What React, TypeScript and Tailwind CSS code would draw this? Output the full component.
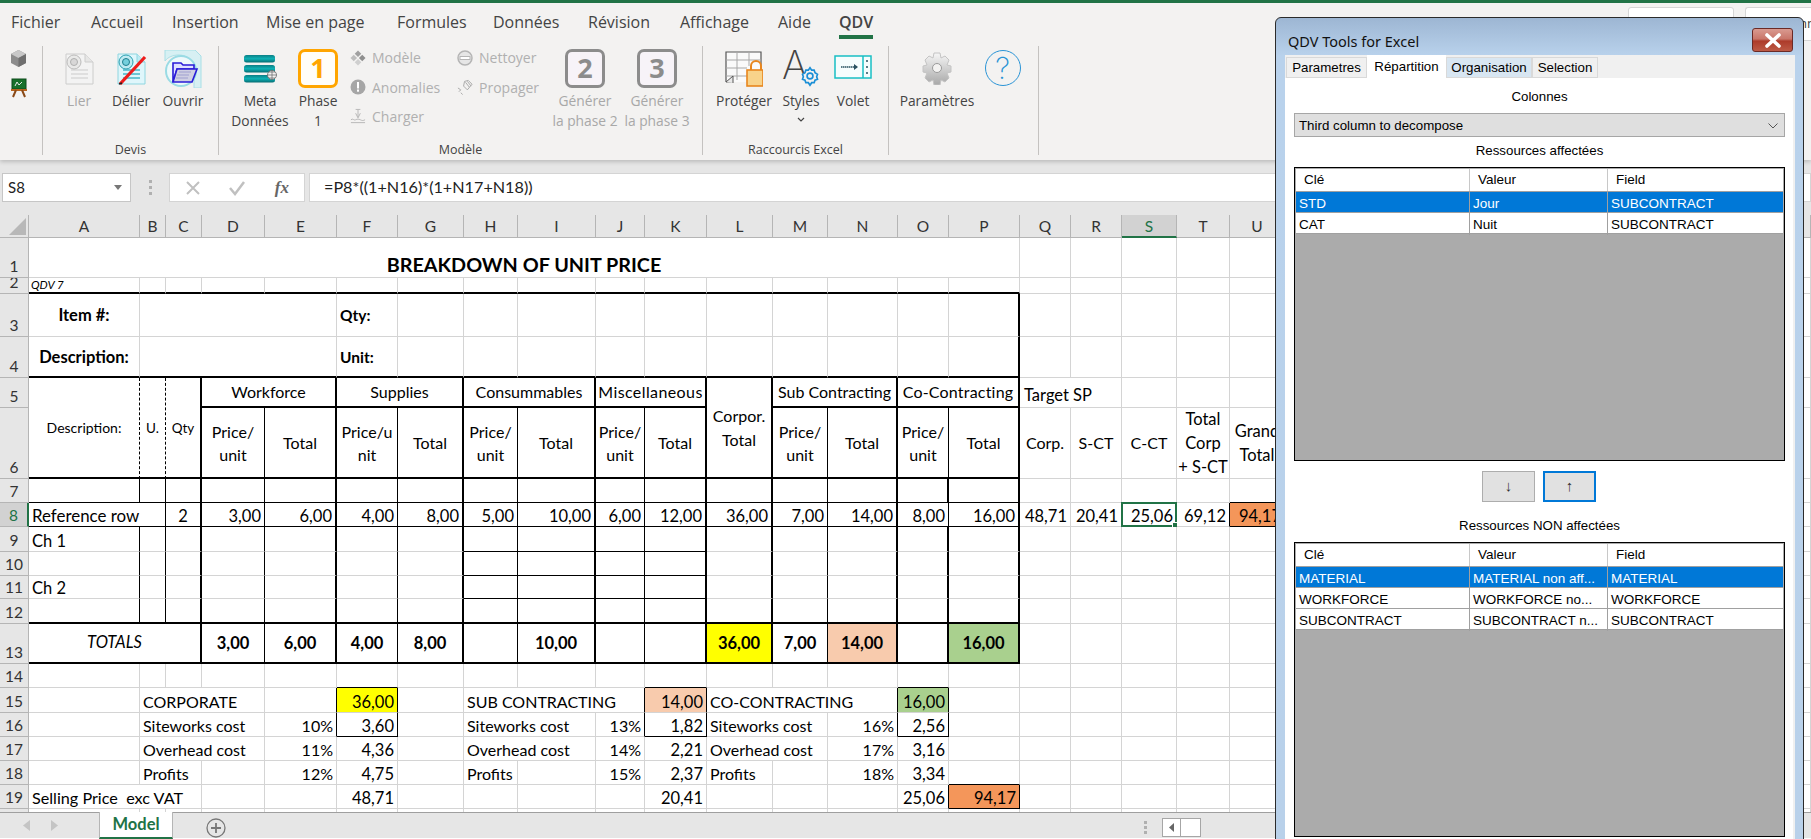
import React from "react";

const COLS = "ABCDEFGHIJKLMNOPQRSTUV".split("");
type Cell = { t?: string; c?: string };
const NUM = "justify-end items-end pr-[3px]";
const LEFT = "justify-start items-end pl-[3px]";
const LBL = LEFT + " text-[16px]";
const PCT = NUM + " text-[16px]";
const CTR = "justify-center items-center text-center whitespace-pre-line";
const BOLDC = "justify-center items-center font-bold";
const HEAD = CTR + " text-[16px]";

const MERGES: [number, number, number, number][] = [
  [1, 0, 1, 15],
  [3, 1, 3, 4],
  [4, 1, 4, 4],
  [5, 0, 6, 0],
  [5, 1, 6, 1],
  [5, 2, 6, 2],
  [5, 3, 5, 4],
  [5, 5, 5, 6],
  [5, 7, 5, 8],
  [5, 9, 5, 10],
  [5, 11, 6, 11],
  [5, 12, 5, 13],
  [5, 14, 5, 15],
  [5, 16, 5, 17],
  [8, 0, 8, 1],
  [13, 0, 13, 2],
  [15, 1, 15, 3],
  [16, 1, 16, 3],
  [17, 1, 17, 3],
  [18, 1, 18, 2],
  [19, 0, 19, 2],
  [15, 7, 15, 9],
  [16, 7, 16, 8],
  [17, 7, 17, 8],
  [15, 11, 15, 13],
  [16, 11, 16, 12],
  [17, 11, 17, 12],
];

const price = "text-[16px] leading-[23px]";
const CELLS: Record<string, Cell> = {
  A1: { t: "BREAKDOWN OF UNIT PRICE", c: "justify-center items-end pb-[3px] font-bold text-[19.8px]" },
  A2: { t: "QDV 7", c: "justify-start items-center pl-[2px] italic text-[11.5px]" },
  A3: { t: "Item #:", c: BOLDC },
  A4: { t: "Description:", c: BOLDC },
  F3: { t: "Qty:", c: "justify-start items-center pl-[3px] font-bold text-[15.5px]" },
  F4: { t: "Unit:", c: "justify-start items-center pl-[3px] font-bold text-[15.5px]" },
  A5: { t: "Description:", c: CTR + " text-[14px]" },
  B5: { t: "U.", c: CTR + " text-[13.5px]" },
  C5: { t: "Qty", c: CTR + " text-[13.5px]" },
  D5: { t: "Workforce", c: HEAD },
  F5: { t: "Supplies", c: HEAD },
  H5: { t: "Consummables", c: HEAD },
  J5: { t: "Miscellaneous", c: HEAD + " tracking-[0.4px]" },
  L5: { t: "Corpor.\nTotal", c: HEAD + " leading-[24px]" },
  M5: { t: "Sub Contracting", c: HEAD },
  O5: { t: "Co-Contracting", c: HEAD + " tracking-[0.2px]" },
  Q5: { t: "Target SP", c: LEFT + " pl-[4px] pb-[2px]" },
  D6: { t: "Price/\nunit", c: CTR + " " + price },
  E6: { t: "Total", c: HEAD },
  F6: { t: "Price/u\nnit", c: CTR + " " + price },
  G6: { t: "Total", c: HEAD },
  H6: { t: "Price/\nunit", c: CTR + " " + price },
  I6: { t: "Total", c: HEAD },
  J6: { t: "Price/\nunit", c: CTR + " " + price },
  K6: { t: "Total", c: HEAD },
  M6: { t: "Price/\nunit", c: CTR + " " + price },
  N6: { t: "Total", c: HEAD },
  O6: { t: "Price/\nunit", c: CTR + " " + price },
  P6: { t: "Total", c: HEAD },
  Q6: { t: "Corp.", c: CTR + " text-[16px]" },
  R6: { t: "S-CT", c: CTR + " text-[16px]" },
  S6: { t: "C-CT", c: CTR + " text-[16px]" },
  T6: { t: "Total\nCorp\n+ S-CT", c: CTR + " leading-[24px]" },
  U6: { t: "Grand\nTotal", c: CTR + " leading-[24px]" },
  A8: { t: "Reference row", c: LEFT + " text-[16.9px]" },
  C8: { t: "2", c: "justify-center items-end" },
  D8: { t: "3,00", c: NUM },
  E8: { t: "6,00", c: NUM },
  F8: { t: "4,00", c: NUM },
  G8: { t: "8,00", c: NUM },
  H8: { t: "5,00", c: NUM },
  I8: { t: "10,00", c: NUM },
  J8: { t: "6,00", c: NUM },
  K8: { t: "12,00", c: NUM },
  L8: { t: "36,00", c: NUM },
  M8: { t: "7,00", c: NUM },
  N8: { t: "14,00", c: NUM },
  O8: { t: "8,00", c: NUM },
  P8: { t: "16,00", c: NUM },
  Q8: { t: "48,71", c: NUM },
  R8: { t: "20,41", c: NUM },
  S8: { t: "25,06", c: NUM },
  T8: { t: "69,12", c: NUM },
  U8: { t: "94,17", c: NUM + " bg-[#f4965a]" },
  A9: { t: "Ch 1", c: LEFT },
  A11: { t: "Ch 2", c: LEFT },
  A13: { t: "TOTALS", c: "justify-center items-center italic pb-[2px]" },
  D13: { t: "3,00", c: BOLDC },
  E13: { t: "6,00", c: BOLDC },
  F13: { t: "4,00", c: BOLDC },
  G13: { t: "8,00", c: BOLDC },
  I13: { t: "10,00", c: BOLDC },
  L13: { t: "36,00", c: BOLDC + " bg-[#ffff00]" },
  M13: { t: "7,00", c: BOLDC },
  N13: { t: "14,00", c: BOLDC + " bg-[#f8cbad]" },
  P13: { t: "16,00", c: BOLDC + " bg-[#a9d08e]" },
  B15: { t: "CORPORATE", c: LBL },
  F15: { t: "36,00", c: NUM + " bg-[#ffff00]" },
  B16: { t: "Siteworks cost", c: LBL },
  E16: { t: "10%", c: PCT },
  F16: { t: "3,60", c: NUM },
  B17: { t: "Overhead cost", c: LBL },
  E17: { t: "11%", c: PCT },
  F17: { t: "4,36", c: NUM },
  B18: { t: "Profits", c: LBL },
  E18: { t: "12%", c: PCT },
  F18: { t: "4,75", c: NUM },
  A19: { t: "Selling Price  exc VAT", c: LEFT + " whitespace-pre text-[16.2px]" },
  F19: { t: "48,71", c: NUM },
  H15: { t: "SUB CONTRACTING", c: LBL },
  K15: { t: "14,00", c: NUM + " bg-[#f8cbad]" },
  H16: { t: "Siteworks cost", c: LBL },
  J16: { t: "13%", c: PCT },
  K16: { t: "1,82", c: NUM },
  H17: { t: "Overhead cost", c: LBL },
  J17: { t: "14%", c: PCT },
  K17: { t: "2,21", c: NUM },
  H18: { t: "Profits", c: LBL },
  J18: { t: "15%", c: PCT },
  K18: { t: "2,37", c: NUM },
  K19: { t: "20,41", c: NUM },
  L15: { t: "CO-CONTRACTING", c: LBL },
  O15: { t: "16,00", c: NUM + " bg-[#a9d08e]" },
  L16: { t: "Siteworks cost", c: LBL },
  N16: { t: "16%", c: PCT },
  O16: { t: "2,56", c: NUM },
  L17: { t: "Overhead cost", c: LBL },
  N17: { t: "17%", c: PCT },
  O17: { t: "3,16", c: NUM },
  L18: { t: "Profits", c: LBL },
  N18: { t: "18%", c: PCT },
  O18: { t: "3,34", c: NUM },
  O19: { t: "25,06", c: NUM },
  P19: { t: "94,17", c: NUM + " bg-[#f4965a]" },
};

const V: Record<string, string> = {
  gray: "border-r border-r-[#d4d4d4]",
  thin: "border-r border-r-black",
  thick: "border-r-2 border-r-black",
  dash: "border-r border-r-black [border-right-style:dashed]",
};
const H: Record<string, string> = {
  gray: "border-b border-b-[#d4d4d4]",
  thin: "border-b border-b-black",
  thick: "border-b-2 border-b-black",
};

function vEdge(r: number, L: string): string {
  if (L === "P" && r >= 3 && r <= 13) return "thick";
  if ("CEGIKLN".includes(L) && r >= 5 && r <= 13) return "thick";
  if (L === "O") {
    if (r === 6 || r === 8) return "thin";
    if (r === 7 || (r >= 9 && r <= 13)) return "thick";
  }
  if ((L === "A" || L === "B") && (r === 5 || r === 6)) return "dash";
  if (L === "A" && (r === 7 || (r >= 9 && r <= 12))) return "thin";
  if (L === "B" && r >= 7 && r <= 12) return "thin";
  if ("DFHJM".includes(L) && r >= 6 && r <= 13) return "thin";
  if ("EFJKNO".includes(L) && (r === 15 || r === 16)) return "thin";
  if ((L === "O" || L === "P") && r === 19) return "thin";
  if (L === "T" && r === 8) return "thin";
  return "gray";
}
function hEdge(r: number, L: string): string {
  const i = COLS.indexOf(L);
  if (i <= 15) {
    if (r === 2 || r === 4 || r === 6 || r === 12 || r === 13) return "thick";
    if (r === 7 || r === 8) return "thin";
    if (r === 5 && L !== "L" && i >= 3) return "thick";
    if ("HIJK".includes(L) && r >= 9 && r <= 11) return "thin";
    if ("FKO".includes(L) && (r === 14 || r === 16)) return "thin";
    if (L === "P" && (r === 18 || r === 19)) return "thin";
  }
  if (L === "U" && (r === 7 || r === 8)) return "thin";
  return "gray";
}

function Sheet() {
  const covered = new Set<string>();
  const spanOf: Record<string, [number, number]> = {};
  MERGES.forEach(([r1, c1, r2, c2]) => {
    spanOf[COLS[c1] + r1] = [r2 - r1 + 1, c2 - c1 + 1];
    for (let r = r1; r <= r2; r++)
      for (let c = c1; c <= c2; c++) if (r !== r1 || c !== c1) covered.add(COLS[c] + r);
  });
  const items: React.ReactNode[] = [];
  items.push(
    <div key="corner" className="col-start-1 row-start-1 bg-[#e6e6e6] border-r border-b border-[#b5b5b5] flex items-end justify-end p-[2px]">
      <svg width="17" height="17" viewBox="0 0 17 17"><polygon points="17,0 17,17 0,17" fill="#b8b8b8" /></svg>
    </div>
  );
  COLS.forEach((L, i) => {
    const sel = L === "S";
    items.push(
      <div
        key={"h" + L}
        style={{ gridColumn: i + 2, gridRow: 1 }}
        className={
          "flex items-center justify-center text-[15.5px] overflow-hidden " +
          (sel
            ? "bg-[#d2d2d2] text-[#217346] border-r border-r-[#b5b5b5] border-b-2 border-b-[#217346]"
            : "bg-[#e6e6e6] text-[#333] border-r border-r-[#b5b5b5] border-b border-b-[#b5b5b5]")
        }
      >
        {L === "V" ? "" : L}
      </div>
    );
  });
  for (let r = 1; r <= 20; r++) {
    const sel = r === 8;
    items.push(
      <div
        key={"r" + r}
        style={{ gridColumn: 1, gridRow: r + 1 }}
        className={
          "flex items-end justify-center text-[15.5px] leading-[20px] overflow-hidden pb-[1px] border-b border-b-[#b5b5b5] " +
          (sel
            ? "bg-[#d2d2d2] text-[#217346] border-r-2 border-r-[#217346]"
            : "bg-[#e6e6e6] text-[#333] border-r border-r-[#b5b5b5]")
        }
      >
        {r === 20 ? "" : r}
      </div>
    );
    COLS.forEach((L, c) => {
      const key = L + r;
      if (covered.has(key)) return;
      const [rs, cs] = spanOf[key] ?? [1, 1];
      const lastL = COLS[c + cs - 1];
      const lastR = r + rs - 1;
      const cell = CELLS[key];
      items.push(
        <div
          key={key}
          style={{ gridColumn: `${c + 2} / span ${cs}`, gridRow: `${r + 1} / span ${rs}` }}
          className={"relative flex whitespace-nowrap " + V[vEdge(lastR, lastL)] + " " + H[hEdge(lastR, L)] + " " + (cell?.c ?? "")}
        >
          {cell?.t}
          {key === "S8" && (
            <div className="absolute -left-px -top-px -right-px -bottom-px border-2 border-[#217346]">
              <div className="absolute -right-[3px] -bottom-[3px] w-[6px] h-[6px] bg-[#217346] border border-white" />
            </div>
          )}
        </div>
      );
    });
  }
  return (
    <div className="h-[598px] overflow-hidden shrink-0 bg-white grid grid-cols-[29px_111px_26px_36px_63px_72px_61px_66px_54px_78px_49px_62px_66px_55px_70px_51px_71px_51px_51px_55px_53px_55px_526px] grid-rows-[23px_40px_16px_43px_41px_30px_71px_24px_24px_25px_24px_23px_25px_40px_24px_25px_24px_24px_24px_24px_24px] font-['Lato',sans-serif] text-[16.5px] leading-[20px] text-black">
      {items}
    </div>
  );
}

function Big({ w, label, icon, dim }: { w: string; label: string; icon: React.ReactNode; dim?: boolean }) {
  return (
    <div className={"flex flex-col items-center shrink-0 " + w}>
      <div className="h-[45px] flex items-center justify-center">{icon}</div>
      <div className={"text-center whitespace-pre-line leading-[20px] text-[13.8px] " + (dim ? "text-[#a8a8a8]" : "text-[#444]")}>{label}</div>
    </div>
  );
}

function Small({ icon, label }: { icon: React.ReactNode; label: string }) {
  return (
    <div className="h-[29.5px] flex items-center gap-[6px] text-[14px] text-[#b0b0b0]">
      <div className="w-4 h-4 flex items-center justify-center">{icon}</div>
      <span>{label}</span>
    </div>
  );
}

function Group({ w, label, children }: { w: string; label?: string; children: React.ReactNode }) {
  return (
    <div className={"h-[109px] flex flex-col border-r border-r-[#c4c2c0] shrink-0 " + w}>
      <div className="flex-1 flex min-h-0">{children}</div>
      <div className="h-[12px] text-center text-[12.5px] leading-[14px] text-[#444]">{label}</div>
    </div>
  );
}

function PhaseBox({ n, on }: { n: string; on?: boolean }) {
  return (
    <div
      className={
        "w-[40px] h-[39px] rounded-[7px] border-[3px] flex items-center justify-center text-[27px] font-bold font-['Noto_Sans',sans-serif] " +
        (on ? "border-[#ffa500] text-[#ffa500] bg-[#fffdf8]" : "border-[#8c8c8c] text-[#8c8c8c] bg-[#f7f3f8]")
      }
    >
      {n}
    </div>
  );
}

const DocIcon = ({ op = 1 }: { op?: number }) => (
  <svg width="32" height="32" viewBox="0 0 32 32" opacity={op}>
    <path d="M3 1h19l8 8v22H3z" fill="#f4f4f4" stroke="#c0c0c0" />
    <path d="M22 1v8h8" fill="#e2e2e2" stroke="#c0c0c0" />
    <path d="M8 17h17M8 21h17M8 25h17" stroke="#cfcfcf" strokeWidth="1.5" />
    <circle cx="11" cy="9" r="7" fill="#e6e6e6" stroke="#a9a9a9" />
    <circle cx="11" cy="9" r="3.5" fill="#cfcfcf" stroke="#9a9a9a" />
  </svg>
);

const Delier = () => (
  <svg width="32" height="32" viewBox="0 0 32 32">
    <path d="M3 1h19l8 8v22H3z" fill="#dff6fb" stroke="#8fd6e0" />
    <path d="M22 1v8h8" fill="#bdeaf2" stroke="#8fd6e0" />
    <path d="M8 17h17M8 21h17M8 25h17" stroke="#47b7c9" strokeWidth="1.5" />
    <circle cx="11" cy="9" r="7" fill="#bfeaf2" stroke="#2a9fb0" />
    <circle cx="11" cy="9" r="3.5" fill="#74cfdc" stroke="#1f7f8e" />
    <path d="M30 4L5 31" stroke="#ee1c1c" strokeWidth="3.2" />
    <path d="M4 31l3-1" stroke="#222" strokeWidth="1.5" />
  </svg>
);

const Ouvrir = () => (
  <svg width="38" height="38" viewBox="0 0 38 38">
    <path d="M1 0h30l6 6v32H30V20c0-9-7-15-15-15-6 0-11 2-14 6z" fill="#d7f0f3" stroke="#a8dfe6" />
    <circle cx="17" cy="21" r="15" fill="#eef9fb" stroke="#9adbe4" strokeWidth="2" />
    <path d="M9 13h8l2 2h11v4H13l-4 13z" fill="#dfe0ff" stroke="#2a1bd8" strokeWidth="1.6" />
    <path d="M13 19h20l-5 13H9z" fill="#cfcfe2" stroke="#2a1bd8" strokeWidth="1.6" />
    <path d="M15 22h12M13 25h12M12 28h12" stroke="#9f9fd0" />
  </svg>
);

const Meta = () => (
  <svg width="34" height="30" viewBox="0 0 34 30">
    <defs>
      <linearGradient id="mg" x1="0" y1="0" x2="0" y2="1">
        <stop offset="0" stopColor="#0b7f86" />
        <stop offset="0.5" stopColor="#0db1b5" />
        <stop offset="1" stopColor="#066c72" />
      </linearGradient>
    </defs>
    <rect x="1" y="1" width="31" height="7.5" rx="2.5" fill="url(#mg)" />
    <rect x="1" y="11" width="31" height="7.5" rx="2.5" fill="url(#mg)" />
    <rect x="1" y="21" width="31" height="7.5" rx="2.5" fill="url(#mg)" />
    <circle cx="29" cy="21" r="4.5" fill="#f3f2f1" stroke="#666" strokeWidth="0.8" />
    <path d="M29 16.5v9M24.5 21h9M26 18h6M26 24h6" stroke="#666" strokeWidth="0.7" />
  </svg>
);

const Proteger = () => (
  <svg width="38" height="36" viewBox="0 0 38 36">
    <path d="M1 1h35v17H24v13H1z" fill="#fafafa" stroke="none" />
    <path d="M1 31V1h35v14M1 31h7" fill="none" stroke="#555" strokeWidth="1.2" />
    <path d="M1 9h35M1 17h21M1 25h21M12 1v28M24 1v14" stroke="#a8a8a8" />
    <path d="M1 31l7-6v7" fill="#e8e8e8" stroke="#555" />
    <path d="M26 20v-5a5 5 0 0 1 10 0v5" fill="none" stroke="#e8861d" strokeWidth="2" />
    <rect x="22" y="19" width="16" height="16" fill="#f8d38a" stroke="#e8861d" strokeWidth="1.6" />
  </svg>
);

const StylesIco = () => (
  <div className="relative w-[38px] h-[38px] -mt-[2px]">
    <span className="absolute left-0 -top-[3px] leading-[38px] text-[39px] font-['Inter',sans-serif] font-extralight text-[#444]">A</span>
    <svg className="absolute right-0 bottom-0" width="20" height="22" viewBox="0 0 24 24" fill="#f3f2f1" stroke="#1b8fd6" strokeWidth="2">
      <path d="M12 2l2 3h3l1 3 3 2-1 3 1 3-3 1-1 3h-3l-2 3-2-3H7l-1-3-3-1 1-3-1-3 3-2 1-3h3z" />
      <circle cx="12" cy="12" r="3.5" />
    </svg>
  </div>
);

const Volet = () => (
  <svg width="38" height="24" viewBox="0 0 38 24" className="-mt-[3px]">
    <rect x="1" y="1" width="36" height="22" fill="#f6fdfd" stroke="#18bfc4" strokeWidth="1.5" />
    <path d="M29 1v22" stroke="#18bfc4" strokeWidth="1.5" />
    <path d="M7 12h16" stroke="#29505f" strokeWidth="1.4" strokeDasharray="1.5 0.5" />
    <path d="M20 9l4 3-4 3z" fill="#29505f" />
    <path d="M33 5v2M33 11v2M33 17v2" stroke="#29505f" strokeWidth="1.5" />
  </svg>
);

const Gear = () => (
  <svg width="32" height="34" viewBox="0 0 32 34" className="-mt-[1px]">
    <defs>
      <linearGradient id="gg" x1="0" y1="0" x2="0" y2="1">
        <stop offset="0" stopColor="#f6f6f6" />
        <stop offset="1" stopColor="#a8a8a8" />
      </linearGradient>
    </defs>
    <path d="M13 2h6l1 5 4-2 4 4-2 5 4 1v6l-4 1 2 5-4 4-4-2-1 5h-6l-1-5-4 2-4-4 2-5-4-1v-6l4-1-2-5 4-4 4 2z" fill="url(#gg)" stroke="#c4c4c4" />
    <circle cx="16" cy="17" r="4.5" fill="#f3f2f1" stroke="#9a9a9a" />
  </svg>
);

const Cube = () => (
  <svg width="19" height="19" viewBox="0 0 19 19">
    <polygon points="9.5,1 17,5 17,14 9.5,18 2,14 2,5" fill="#8c8c8c" />
    <polygon points="9.5,1 17,5 9.5,9 2,5" fill="#c8c8c8" />
    <polygon points="9.5,9 17,5 17,14 9.5,18" fill="#6f6f6f" />
  </svg>
);

const Easel = () => (
  <svg width="18" height="20" viewBox="0 0 18 20">
    <rect x="2" y="1" width="14" height="10" fill="#17702a" stroke="#0d4a1a" />
    <path d="M5 8l2-4 2 3 3-3" stroke="#e8e8e8" fill="none" />
    <path d="M1 12h16" stroke="#b7641e" strokeWidth="2" />
    <path d="M6 12l-3 7M12 12l3 7" stroke="#8a4a18" strokeWidth="2" />
  </svg>
);

const S = {
  diamonds: (
    <svg width="17" height="16" viewBox="0 0 17 16">
      <path d="M8.5 0l3.5 3.5L8.5 7 5 3.5z" fill="#a0a0a0" />
      <path d="M4 4.5L7.5 8 4 11.5.5 8z" fill="#bdbdbd" />
      <path d="M13 4.5L16.5 8 13 11.5 9.5 8z" fill="#8f8f8f" />
      <path d="M8.5 9L12 12.5 8.5 16 5 12.5z" fill="#cfcfcf" />
    </svg>
  ),
  warn: (
    <svg width="16" height="16" viewBox="0 0 16 16">
      <circle cx="8" cy="8" r="7.5" fill="#a6a6a6" />
      <rect x="7" y="3" width="2" height="6.5" fill="#fff" />
      <rect x="7" y="10.5" width="2" height="2.2" fill="#fff" />
    </svg>
  ),
  charge: (
    <svg width="17" height="17" viewBox="0 0 17 17" fill="none" stroke="#b5b5b5">
      <path d="M8.5 1v8M6 1h5M6 5l2.5 5L11 5" />
      <path d="M1 12c2-2 3 1 5 0s3-1 5 0 3 1 5 0M1 15h15" />
    </svg>
  ),
  clock: (
    <svg width="16" height="16" viewBox="0 0 16 16">
      <circle cx="8" cy="8" r="7" fill="#e6e6e6" stroke="#b5b5b5" strokeWidth="1.5" />
      <rect x="3" y="6.5" width="10" height="3" fill="#fff" stroke="#b5b5b5" />
    </svg>
  ),
  sat: (
    <svg width="17" height="17" viewBox="0 0 17 17" fill="none" stroke="#a6a6a6">
      <path d="M8 2l4-1 4 4-5 6-4-4zM9 3l4 5M11 2l4 5" />
      <path d="M1 9l3 2-2 2M4 14l2 2" />
    </svg>
  ),
};

const TABS: [string, string][] = [
  ["Fichier", "w-[80px]"],
  ["Accueil", "w-[81px]"],
  ["Insertion", "w-[94px]"],
  ["Mise en page", "w-[131px]"],
  ["Formules", "w-[96px]"],
  ["Données", "w-[95px]"],
  ["Révision", "w-[92px]"],
  ["Affichage", "w-[98px]"],
  ["Aide", "w-[61px]"],
];

function Ribbon() {
  return (
    <div className="relative z-10 shrink-0 bg-[#f3f2f1] shadow-[0_2px_4px_rgba(0,0,0,0.18)] font-['Open_Sans',sans-serif]">
      <div className="h-[3px] bg-[#217346]" />
      <div className="h-[43px] flex pl-[11px] text-[#444] text-[16px] leading-[20px]">
        {TABS.map(([t, w]) => (
          <div key={t} className={"pt-[9px] shrink-0 " + w}>{t}</div>
        ))}
        <div className="relative pt-[9px] font-semibold">
          QDV
          <div className="absolute left-0 right-0 top-[32px] h-[4px] bg-[#217346]" />
        </div>
        <div className="ml-auto flex gap-[11px] pt-[4px] text-[13px]">
          <div className="w-[106px] h-[34px] bg-white border border-[#d6d6d6] rounded-[3px] pl-[22px] pt-[5px]">Partager</div>
          <div className="w-[66px] h-[34px] bg-white border border-[#d6d6d6] border-r-0 rounded-l-[3px] pl-[33px] pt-[5px] whitespace-nowrap overflow-hidden">Commentaires</div>
        </div>
      </div>
      <div className="flex h-[114px] items-start">
        <Group w="w-[43px]">
          <div className="flex flex-col items-center w-full pt-[3px] gap-[10px] pr-[5px]">
            <Cube />
            <Easel />
          </div>
        </Group>
        <Group w="w-[176px]" label="Devis">
          <div className="flex pl-[10px]">
            <Big w="w-[52px]" label="Lier" dim icon={<DocIcon op={0.75} />} />
            <Big w="w-[52px]" label="Délier" icon={<Delier />} />
            <Big w="w-[52px]" label="Ouvrir" icon={<Ouvrir />} />
          </div>
        </Group>
        <Group w="w-[484px]" label="Modèle">
          <div className="flex pl-[4px]">
            <Big w="w-[74px]" label={"Meta\nDonnées"} icon={<Meta />} />
            <Big w="w-[42px]" label={"Phase\n1"} icon={<PhaseBox n="1" on />} />
            <div className="w-[107px] ml-[11px] -mt-[3px] shrink-0">
              <Small icon={S.diamonds} label="Modèle" />
              <Small icon={S.warn} label="Anomalies" />
              <Small icon={S.charge} label="Charger" />
            </div>
            <div className="w-[92px] -mt-[3px] shrink-0">
              <Small icon={S.clock} label="Nettoyer" />
              <Small icon={S.sat} label="Propager" />
            </div>
            <Big w="w-[72px]" dim label={"Générer\nla phase 2"} icon={<PhaseBox n="2" />} />
            <Big w="w-[72px]" dim label={"Générer\nla phase 3"} icon={<PhaseBox n="3" />} />
          </div>
        </Group>
        <Group w="w-[186px]" label="Raccourcis Excel">
          <div className="flex pl-[11px]">
            <Big w="w-[60px]" label="Protéger" icon={<Proteger />} />
            <div className="w-[54px] flex flex-col items-center shrink-0">
              <Big w="w-[54px]" label="Styles" icon={<StylesIco />} />
              <svg width="8" height="6" viewBox="0 0 8 6" className="mt-[6px]" fill="none" stroke="#444" strokeWidth="1.2"><path d="M1 1l3 3 3-3" /></svg>
            </div>
            <Big w="w-[50px]" label="Volet" icon={<Volet />} />
          </div>
        </Group>
        <Group w="w-[150px]">
          <div className="flex pl-[8px]">
            <Big w="w-[80px]" label="Paramètres" icon={<Gear />} />
            <div className="w-[51px] flex justify-center pt-[4px] shrink-0">
              <div className="w-[36px] h-[36px] rounded-full border-[1.5px] border-[#2a94d6] flex items-center justify-center text-[#2a94d6] text-[30px] font-['Inter',sans-serif] font-extralight leading-none">?</div>
            </div>
          </div>
        </Group>
      </div>
    </div>
  );
}

function FormulaBar() {
  return (
    <div className="h-[55px] shrink-0 bg-[#e6e6e6] pt-[13px] flex items-start font-['Lato',sans-serif]">
      <div className="ml-[2px] w-[129px] h-[29px] bg-white border border-[#c6c6c6] flex items-center justify-between pl-[5px] pr-[8px] text-[15px] text-[#222]">
        S8
        <svg width="8" height="5" viewBox="0 0 8 5"><polygon points="0,0 8,0 4,5" fill="#777" /></svg>
      </div>
      <div className="w-[38px] h-[29px] flex items-center justify-center">
        <svg width="3" height="15" viewBox="0 0 3 15" fill="#b0b0b0"><rect width="3" height="3" /><rect y="6" width="3" height="3" /><rect y="12" width="3" height="3" /></svg>
      </div>
      <div className="w-[136px] h-[29px] bg-white border border-[#d4d4d4] flex items-center">
        <div className="w-[45px] ml-[1px] flex justify-center">
          <svg width="16" height="16" viewBox="0 0 16 16" stroke="#c0c0c0" strokeWidth="2"><path d="M2 2l12 12M14 2L2 14" /></svg>
        </div>
        <div className="w-[45px] flex justify-center">
          <svg width="18" height="16" viewBox="0 0 18 16" fill="none" stroke="#c0c0c0" strokeWidth="2.5"><path d="M2 8l5 6L16 2" /></svg>
        </div>
        <div className="w-[45px] flex justify-center font-['Liberation_Serif',serif] italic font-bold text-[17px] text-[#666]">fx</div>
      </div>
      <div className="ml-[4px] flex-1 h-[29px] bg-white border border-[#d4d4d4] flex items-center pl-[14px] text-[16.2px] text-[#222]">
        =P8*((1+N16)*(1+N17+N18))
      </div>
    </div>
  );
}

function TabsBar() {
  return (
    <div className="relative z-[1] h-[26px] shrink-0 -mt-px bg-[#e6e6e6] border-t border-t-[#9f9f9f] flex font-['Lato',sans-serif]">
      <div className="w-[99px] flex items-center gap-[21px] pl-[23px]">
        <svg width="7" height="11" viewBox="0 0 7 11"><polygon points="7,0 7,11 0,5.5" fill="#c4c4c4" /></svg>
        <svg width="7" height="11" viewBox="0 0 7 11"><polygon points="0,0 0,11 7,5.5" fill="#c4c4c4" /></svg>
      </div>
      <div className="w-[74px] -mt-px h-[27px] bg-white border-x border-x-[#b5b5b5] border-b-2 border-b-[#217346] flex items-center justify-center text-[16.5px] font-bold text-[#217346]">Model</div>
      <div className="ml-[33px] pt-[5px]">
        <svg width="20" height="20" viewBox="0 0 20 20" fill="none" stroke="#777" strokeWidth="1.3"><circle cx="10" cy="10" r="9" /><path d="M10 5v10M5 10h10" strokeWidth="1.8" /></svg>
      </div>
      <div className="ml-[918px] pt-[8px]">
        <svg width="3" height="13" viewBox="0 0 3 13" fill="#b0b0b0"><rect width="3" height="3" /><rect y="5" width="3" height="3" /><rect y="10" width="3" height="3" /></svg>
      </div>
      <div className="ml-[15px] mt-[5px] h-[19px] w-[39px] flex bg-white border border-[#a6a6a6]">
        <div className="w-[18px] border-r border-r-[#a6a6a6] flex items-center justify-center">
          <svg width="5" height="9" viewBox="0 0 5 9"><polygon points="5,0 5,9 0,4.5" fill="#666" /></svg>
        </div>
      </div>
    </div>
  );
}

function ListTable({ rows, h }: { rows: string[][]; h: string }) {
  return (
    <div className={"border border-black bg-[#ababab] flex flex-col p-px overflow-hidden " + h}>
      <div className="grid grid-cols-[174px_138px_1fr] h-[23px] bg-white shrink-0 border-b border-b-[#a0a0a0] text-black">
        {["Clé", "Valeur", "Field"].map((t, i) => (
          <div key={t} className={"pl-[8px] pt-px flex items-center text-[13.5px] " + (i < 2 ? "border-r border-r-[#c8c8c8]" : "")}>{t}</div>
        ))}
      </div>
      {rows.map((row, i) => (
        <div key={i} className={"grid grid-cols-[174px_138px_1fr] h-[21px] shrink-0 border-b border-b-[#a0a0a0] " + (i === 0 ? "bg-[#0078d7] text-white" : "bg-white text-black")}>
          {row.map((t, j) => (
            <div key={j} className={"pl-[3px] pt-[2px] flex items-center whitespace-nowrap text-[13.5px] " + (j < 2 ? "border-r border-r-[#a0a0a0]" : "")}>{t}</div>
          ))}
        </div>
      ))}
    </div>
  );
}

function Dialog() {
  return (
    <div className="absolute z-20 left-[1275px] top-[17px] w-[529px] h-[830px] rounded-t-[6px] border border-[#2b2b2b] bg-[linear-gradient(#9db6d3_0px,#b9d2ec_38px,#b9d1ea_100%)] font-['Liberation_Sans',sans-serif] text-[13.3px] text-black flex flex-col pl-[9px] pr-[8px]">
      <div className="h-[37px] flex items-start justify-between shrink-0 pl-[3px] pr-[2px]">
        <span className="mt-[13px] leading-[20px] font-['Noto_Sans',sans-serif] text-[14.5px] text-[#111]">QDV Tools for Excel</span>
        <div className="w-[41px] h-[24px] mt-[10px] rounded-[3px] border border-[#6b2a26] bg-[linear-gradient(#d99a90_0%,#c9766a_45%,#ad3b2a_55%,#bd5a46_100%)] flex items-center justify-center">
          <svg width="18" height="15" viewBox="0 0 18 15" fill="none" stroke="#fff" strokeWidth="3.6" strokeLinecap="round"><path d="M3 2l12 11M15 2L3 13" /></svg>
        </div>
      </div>
      <div className="h-[23px] shrink-0 bg-[#f0f0f0] flex items-end pl-[1px] gap-0">
        <div className="w-[81px] h-[21px] bg-[#f0f0f0] border border-[#d9d9d9] flex items-center justify-center pt-px">Parametres</div>
        <div className="w-[79px] h-[23px] bg-white flex items-start pt-[2px] justify-center">Répartition</div>
        <div className="w-[86px] h-[21px] bg-[#d8e6f2] border border-[#d9d9d9] flex items-center justify-center pt-px">Organisation</div>
        <div className="w-[66px] h-[21px] bg-[#f0f0f0] border border-[#d9d9d9] flex items-center justify-center pt-px">Selection</div>
      </div>
      <div className="flex-1 bg-[#f0f0f0] pr-[2px]">
        <div className="bg-white h-full pl-[9px] pr-[8px] pt-[9px]">
          <div className="h-[18px] pt-[2px] flex items-center justify-center">Colonnes</div>
          <div className="mt-[8px] h-[24px] pt-px bg-[#dfdfdf] border border-[#a6a6a6] flex items-center justify-between pl-[4px] pr-[6px]">
            Third column to decompose
            <svg width="10" height="6" viewBox="0 0 10 6" fill="none" stroke="#555"><path d="M.5.5L5 5 9.5.5" /></svg>
          </div>
          <div className="h-[26px] pt-[2px] flex items-center justify-center">Ressources affectées</div>
          <ListTable
            h="mt-[4px] h-[294px]"
            rows={[
              ["STD", "Jour", "SUBCONTRACT"],
              ["CAT", "Nuit", "SUBCONTRACT"],
            ]}
          />
          <div className="mt-[10px] flex justify-center gap-[8px] pr-[1px] h-[31px]">
            <div className="w-[53px] bg-[#e1e1e1] border border-[#adadad] flex items-center justify-center text-[15px] text-[#333]">↓</div>
            <div className="w-[53px] bg-[#e1e1e1] border-2 border-[#0078d7] flex items-center justify-center text-[15px] text-[#333]">↑</div>
          </div>
          <div className="h-[40px] pt-[7px] flex items-center justify-center">Ressources NON affectées</div>
          <ListTable
            h="h-[295px]"
            rows={[
              ["MATERIAL", "MATERIAL non aff...", "MATERIAL"],
              ["WORKFORCE", "WORKFORCE no...", "WORKFORCE"],
              ["SUBCONTRACT", "SUBCONTRACT n...", "SUBCONTRACT"],
            ]}
          />
        </div>
      </div>
    </div>
  );
}

export default function App() {
  return (
    <div className="relative w-[1811px] h-[839px] overflow-hidden bg-white flex flex-col">
      <Ribbon />
      <FormulaBar />
      <Sheet />
      <TabsBar />
      <Dialog />
    </div>
  );
}
